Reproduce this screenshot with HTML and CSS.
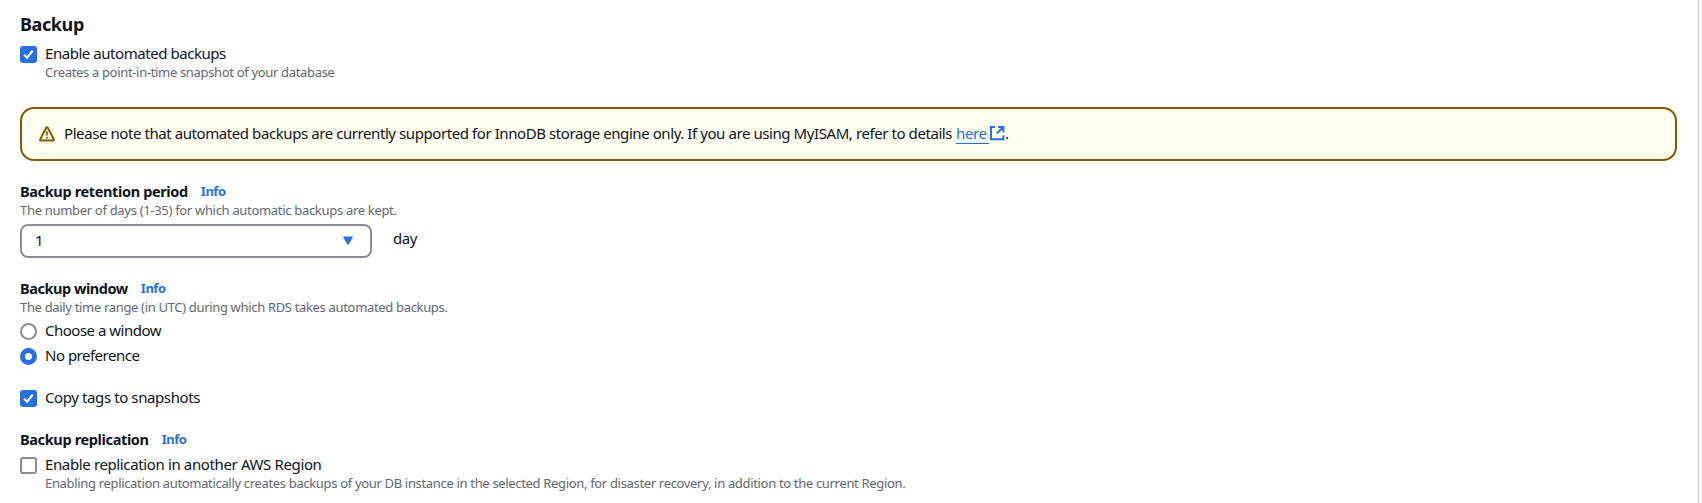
FILE: index.html
```html
<!DOCTYPE html>
<html lang="en">
<head>
<meta charset="utf-8">
<title>Backup</title>
<link rel="stylesheet" href="styles.css">
</head>
<body>
<main class="panel">
  <h2 class="title">Backup</h2>

  <section class="field field-automated">
    <label class="option">
      <span class="box checked"><svg viewBox="0 0 17 17"><path d="M4 8.7l3 3 5.7-7"/></svg></span>
      <span class="t-enable">Enable automated backups</span>
    </label>
    <p class="hint indent">Creates a point-in-time snapshot of your database</p>
  </section>

  <div class="alert">
    <svg class="warn" viewBox="0 0 16 16"><path class="tri" d="M7.2 1.8Q8 .6 8.8 1.8L14.8 13.4Q15.3 14.6 14 14.6H2Q.7 14.6 1.2 13.4z"/><path class="bang" d="M8 5.2v4.3M8 10.7v2"/></svg>
    <p class="alert-text"><span class="t-note">Please note that automated backups are currently supported for InnoDB storage engine only. If you are using MyISAM, refer to details</span><a class="link"><span class="here">here</span><svg class="external" viewBox="0 0 16 16"><path d="M6.2 2H2v12.2h12.4V10.2M9 2h5.4v5.2M14.2 2.2L7.8 8.4"/></svg></a><span>.</span></p>
  </div>

  <section class="field field-retention">
    <div class="label"><span class="t-retention">Backup retention period</span><a class="info">Info</a></div>
    <p class="hint t-days">The number of days (1-35) for which automatic backups are kept.</p>
    <div class="select-row">
      <div class="select"><span class="value">1</span><svg class="caret" viewBox="0 0 12 10"><path d="M1.5 1h9L6 8.5z"/></svg></div>
      <span class="unit">day</span>
    </div>
  </section>

  <section class="field field-window">
    <div class="label"><span class="t-window">Backup window</span><a class="info">Info</a></div>
    <p class="hint">The daily time range (in UTC) during which RDS takes automated backups.</p>
    <div class="radios">
      <label class="option"><span class="radio"></span><span class="t-choose">Choose a window</span></label>
      <label class="option"><span class="radio selected"></span><span class="t-choose">No preference</span></label>
    </div>
  </section>

  <section class="field field-tags">
    <label class="option">
      <span class="box checked"><svg viewBox="0 0 17 17"><path d="M4 8.7l3 3 5.7-7"/></svg></span>
      <span class="t-copy">Copy tags to snapshots</span>
    </label>
  </section>

  <section class="field field-replication">
    <div class="label"><span class="t-replication">Backup replication</span><a class="info">Info</a></div>
    <label class="option option-region"><span class="box"></span><span class="t-region">Enable replication in another AWS Region</span></label>
    <p class="hint indent">Enabling replication automatically creates backups of your DB instance in the selected Region, for disaster recovery, in addition to the current Region.</p>
  </section>
</main>
</body>
</html>
```
FILE: styles.css
```css
* { box-sizing: border-box; }
body {
  margin: 0;
  background: #fff;
  color: #0f141a;
  font: 15px/22px "Noto Sans", sans-serif;
  overflow: hidden;
}
.panel {
  width: 1699px;
  height: 503px;
  padding: 9px 20px 0;
  border-right: 1px solid #c6c6cd;
  white-space: nowrap;
}
p, h2 { margin: 0; }
.title { font-size: 18px; line-height: 30px; font-weight: 700; letter-spacing: -0.4px; }

.option { display: flex; align-items: flex-start; gap: 8px; height: 22px; }
.hint { font-size: 13px; line-height: 16px; color: #656871; letter-spacing: -0.33px; }
.indent { padding-left: 25px; }

.t-enable { letter-spacing: -0.45px; }
.t-note { letter-spacing: -0.422px; }
.t-days { letter-spacing: -0.31px; }
.t-choose { letter-spacing: -0.5px; }
.t-copy { letter-spacing: -0.4px; }
.t-region { letter-spacing: -0.37px; }
.t-retention, .t-replication { letter-spacing: -0.36px; }
.t-window { letter-spacing: -0.45px; }

.box, .radio { width: 17px; height: 17px; flex: none; margin-top: 4px; border: 2px solid #8c8c94; }
.box { border-radius: 3px; }
.box.checked { border: 0; background: #276fe5; }
.box svg { display: block; width: 17px; height: 17px; fill: none; stroke: #fff; stroke-width: 2.2; }
.radio { border-radius: 50%; }
.radio.selected { border: 5px solid #276fe5; }

.field-automated { margin-top: 3px; }
.alert {
  display: flex;
  align-items: center;
  width: 1657px;
  height: 54px;
  margin-top: 27px;
  padding: 0 17px;
  border: 2px solid #855900;
  border-radius: 14px;
  background: #fffef0;
}
.warn { width: 16px; height: 16px; margin-right: 9px; fill: none; stroke: #855900; stroke-width: 2; stroke-linejoin: round; }
.warn .bang { stroke-width: 1.6; }
.alert-text { display: flex; align-items: center; height: 22px; margin-bottom: 2px; }
.link { display: flex; align-items: center; margin-left: 4px; color: #276fe5; }
.here { width: 33px; height: 22px; border-bottom: 1px solid #276fe5; letter-spacing: -0.4px; }
.external { width: 16px; height: 16px; fill: none; stroke: #276fe5; stroke-width: 2; }

.field-retention { margin-top: 19px; }
.label { display: flex; align-items: center; gap: 13px; height: 22px; font-size: 14.5px; font-weight: 700; }
.info { font-size: 13px; color: #276fe5; letter-spacing: -0.5px; }
.select-row { display: flex; gap: 21px; margin-top: 6px; }
.select {
  display: flex;
  align-items: center;
  justify-content: space-between;
  width: 352px;
  height: 34px;
  padding: 0 16px 0 13px;
  border: 2px solid #8c8c94;
  border-radius: 8px;
}
.value { margin-bottom: 2px; }
.caret { width: 12px; height: 10px; fill: #276fe5; stroke: #276fe5; stroke-linejoin: round; }
.unit { line-height: 28px; letter-spacing: -0.5px; }

.field-window { margin-top: 19px; }
.radios { display: grid; gap: 3px; margin-top: 4px; }
.field-tags { margin-top: 20px; }
.field-replication { margin-top: 20px; }
.option-region { margin-top: 3px; }
```
